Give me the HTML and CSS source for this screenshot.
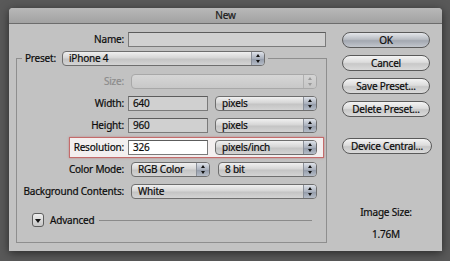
FILE: index.html
```html
<!DOCTYPE html>
<html lang="en">

<head>
    <meta charset="UTF-8">
    <title>New</title>
    <link rel="stylesheet" href="styles.css">
</head>

<body>
    <div class="dialog">
        <div class="titlebar">New</div>

        <div class="dialog-body">
            <div class="form">
                <div class="name-row">
                    <label class="label name-label">Name:</label>
                    <div class="input name-input"></div>
                </div>

                <fieldset class="preset">
                    <legend>
                        <span class="legend-text">Preset:</span>
                        <div class="select preset-select">iPhone 4<span class="stepper"></span></div>
                    </legend>

                    <div class="rows">
                        <div class="row">
                            <label class="label disabled">Size:</label>
                            <div class="select select-disabled wide"><span class="stepper"></span></div>
                        </div>
                        <div class="row">
                            <label class="label">Width:</label>
                            <div class="input num">640</div>
                            <div class="select unit">pixels<span class="stepper"></span></div>
                        </div>
                        <div class="row">
                            <label class="label">Height:</label>
                            <div class="input num">960</div>
                            <div class="select unit">pixels<span class="stepper"></span></div>
                        </div>
                        <div class="row highlight">
                            <label class="label">Resolution:</label>
                            <div class="input num white">326</div>
                            <div class="select unit">pixels/inch<span class="stepper"></span></div>
                        </div>
                        <div class="row">
                            <label class="label">Color Mode:</label>
                            <div class="select mode">RGB Color<span class="stepper"></span></div>
                            <div class="select bits">8 bit<span class="stepper"></span></div>
                        </div>
                        <div class="row">
                            <label class="label">Background Contents:</label>
                            <div class="select wide">White<span class="stepper"></span></div>
                        </div>
                    </div>

                    <div class="advanced">
                        <div class="disclosure"><span class="tri"></span></div>
                        <span class="advanced-text">Advanced</span>
                        <div class="rule"></div>
                    </div>
                </fieldset>
            </div>

            <div class="buttons">
                <div class="button default">OK</div>
                <div class="button">Cancel</div>
                <div class="button">Save Preset...</div>
                <div class="button">Delete Preset...</div>
                <div class="button device">Device Central...</div>

                <div class="image-size">
                    <div>Image Size:</div>
                    <div class="size-value">1.76M</div>
                </div>
            </div>
        </div>
    </div>
</body>

</html>
```

FILE: styles.css
```css
body {
    margin: 0;
    padding: 8px 0 0 9px;
    background: #595959;
    font-family: "Noto Sans", "DejaVu Sans", sans-serif;
    font-size: 10px;
    letter-spacing: -0.2px;
    -webkit-text-stroke: 0.2px;
    color: #0c0c0c;
    height: 261px;
    box-sizing: border-box;
    overflow: hidden;
}

.dialog {
    width: 433px;
    height: 243px;
    background: #c2c2c2;
    border-radius: 4px 4px 0 0;
    box-shadow: 0 2px 10px rgba(0, 0, 0, 0.55);
    overflow: hidden;
}

.titlebar {
    height: 15px;
    line-height: 15px;
    text-align: center;
    background: linear-gradient(#b8b8b8, #a2a2a2);
    border-bottom: 1px solid #6c6c6c;
    color: #1a1a1a;
}

.dialog-body {
    display: flex;
    padding: 8px 0 0 7px;
}

.form {
    width: 311px;
}

.label {
    display: block;
    text-align: right;
    line-height: 15px;
    white-space: nowrap;
}

.label.disabled {
    color: #8c8c8c;
}

.name-row {
    display: flex;
    height: 15px;
}

.name-label {
    width: 108px;
}

.input {
    height: 15px;
    box-sizing: border-box;
    border: 1px solid #7a7a7a;
    border-top-color: #5c5c5c;
    background: #d0d0d0;
    line-height: 13px;
    padding-left: 4px;
}

.name-input {
    width: 198px;
    margin-left: 4px;
}

.input.num {
    width: 80px;
    margin-left: 4px;
}

.input.white {
    background: #fff;
}

.preset {
    margin: 4px 0 0;
    padding: 8px 0 15px;
    border: 1px solid #8e8e8e;
    min-width: 0;
}

.preset legend {
    display: flex;
    align-items: center;
    margin-left: 5px;
    padding: 0 3px;
}

.legend-text {
    line-height: 15px;
}

.select {
    position: relative;
    height: 15px;
    box-sizing: border-box;
    border: 1px solid #6e6e6e;
    border-radius: 4px;
    background: linear-gradient(#f0f0f0, #d6d6d6 45%, #c4c4c4 55%, #d4d4d4);
    line-height: 13px;
    padding-left: 6px;
    overflow: hidden;
}

.stepper {
    position: absolute;
    top: 0;
    right: 0;
    bottom: 0;
    width: 12px;
    border-left: 1px solid #8a8f98;
    background: linear-gradient(#dfe3ea, #aab1bd 50%, #959dab 55%, #b5bcc7);
}

.stepper::before,
.stepper::after {
    content: "";
    position: absolute;
    left: 4px;
    border-left: 2px solid transparent;
    border-right: 2px solid transparent;
}

.stepper::before {
    top: 2px;
    border-bottom: 3px solid #111;
}

.stepper::after {
    bottom: 2px;
    border-top: 3px solid #111;
}

.preset-select {
    width: 203px;
    margin-left: 6px;
}

.select-disabled {
    border-color: #a8a8a8;
    background: linear-gradient(#d6d6d6, #c8c8c8);
}

.select-disabled .stepper {
    border-left-color: #b0b0b0;
    background: linear-gradient(#d4d4d4, #c6c6c6);
}

.select-disabled .stepper::before {
    border-bottom-color: #9a9a9a;
}

.select-disabled .stepper::after {
    border-top-color: #9a9a9a;
}

.rows {
    display: grid;
    grid-auto-rows: 15px;
    row-gap: 7px;
}

.row {
    display: flex;
}

.row .label {
    width: 107px;
}

.select.wide {
    width: 186px;
    margin-left: 7px;
}

.select.unit {
    width: 102px;
    margin-left: 7px;
}

.select.mode {
    width: 79px;
    margin-left: 7px;
}

.select.bits {
    width: 99px;
    margin-left: 8px;
}

.row.highlight {
    margin: -3px 0 -3px 52px;
    padding: 2px 0;
    width: 253px;
    border: 1px solid #c46b6b;
    background: #f3efef;
    box-shadow: 0 0 2px rgba(190, 80, 80, 0.5);
}

.row.highlight .label {
    width: 54px;
}

.advanced {
    display: flex;
    align-items: center;
    margin-top: 14px;
    padding-left: 15px;
    height: 14px;
}

.disclosure {
    position: relative;
    width: 12px;
    height: 14px;
    box-sizing: border-box;
    border: 1px solid #5e5e5e;
    border-radius: 3px;
    background: linear-gradient(#eeeeee, #c6c6c6);
}

.tri {
    position: absolute;
    left: 2px;
    top: 5px;
    border-left: 3px solid transparent;
    border-right: 3px solid transparent;
    border-top: 4px solid #111;
}

.advanced-text {
    margin-left: 6px;
}

.rule {
    flex: 1;
    height: 1px;
    background: #8a8a8a;
    margin: 1px 14px 0 5px;
}

.buttons {
    width: 90px;
    margin-left: 15px;
    display: flex;
    flex-direction: column;
    align-items: flex-start;
}

.button {
    width: 88px;
    height: 16px;
    box-sizing: border-box;
    border: 1px solid #5a5a5a;
    border-radius: 8px;
    background: linear-gradient(#f4f4f4, #dcdcdc 45%, #c8c8c8 55%, #dadada);
    text-align: center;
    line-height: 14px;
    margin-bottom: 7px;
}

.button.default {
    background: linear-gradient(#e4e6ea, #b9bdc4 45%, #a3a8b1 55%, #c2c6cd);
}

.button.device {
    width: 90px;
    margin-top: 14px;
}

.image-size {
    width: 88px;
    margin-top: 45px;
    text-align: center;
    line-height: 12px;
}

.size-value {
    margin-top: 10px;
}
```
